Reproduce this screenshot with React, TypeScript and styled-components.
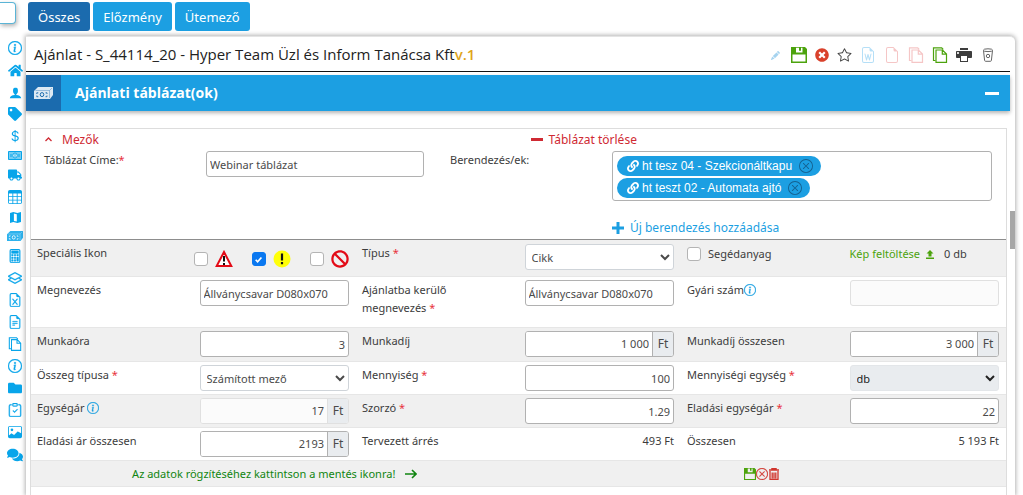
import React from "react";
import styled, { createGlobalStyle, css } from "styled-components";
import {
  BsInfoCircle, BsTable, BsCalculator, BsLayers, BsFileEarmarkExcel, BsFileEarmarkText,
  BsFileEarmarkWord, BsFileEarmark, BsClipboardCheck, BsImage, BsCurrencyDollar, BsPencilFill, BsXCircle,
} from "react-icons/bs";
import { FaHome, FaTag, FaTruck, FaFolder, FaComments, FaTimesCircle, FaLink, FaBan } from "react-icons/fa";
import { ImUser, ImPrinter } from "react-icons/im";
import { GoStar } from "react-icons/go";

const sans = '"Noto Sans", "Open Sans", sans-serif';
const blue = "#1c9fe2";
const darkBlue = "#1b6bae";
const red = "#cf2a33";
const green = "#4ca30d";

const GlobalStyle = createGlobalStyle`
  *, *::before, *::after { box-sizing: border-box; }
  html, body, #root { height: 100%; }
  body { margin: 0; background: #fff; overflow: hidden; font: 11px/18px ${sans}; color: #3c3c3c; }
  button, input, select { font: inherit; color: inherit; }
  button { cursor: pointer; }
  svg { display: block; flex: none; }
`;

const Page = styled.div`
  display: grid;
  grid-template-columns: 26px minmax(0, 1fr);
  height: 100%;
  overflow: hidden;
`;
const Side = styled.aside`
  display: flex;
  flex-direction: column;
  padding-top: 2px;
`;
const Handle = styled.button`
  width: 16px;
  height: 22px;
  margin-bottom: 13px;
  padding: 0;
  border: 1px solid #5ab4d6;
  border-left: 0;
  border-radius: 0 4px 4px 0;
  background: #fff;
  box-shadow: 1px 2px 4px rgba(0, 0, 0, 0.3);
`;
const SideNav = styled.nav`
  display: flex;
  flex-direction: column;
  justify-content: space-around;
  min-height: 430px;
`;
const SideLink = styled.a`
  display: flex;
  justify-content: center;
  padding-left: 4px;
  color: #08a5ea;
  font-size: 14px;
`;

const Main = styled.main`
  display: flex;
  flex-direction: column;
  min-width: 0;
  padding: 2px 8px 0 0;
`;
const Tabs = styled.nav`
  display: flex;
  gap: 3px;
  padding: 0 2px;
  margin-bottom: 5px;
`;
const Tab = styled.button<{ $active?: boolean }>`
  height: 29px;
  padding: 0 10px;
  border: 0;
  border-radius: 3px;
  background: ${(p) => (p.$active ? darkBlue : blue)};
  color: #fff;
  font-size: 13px;
  line-height: 20px;
`;
const Card = styled.section`
  position: relative;
  flex: 1;
  padding-right: 5px;
  border-top: 1px solid #e4e4e4;
  border-radius: 0 5px 0 0;
  background: #fff;
  box-shadow: 0 0 4px 1px rgba(0, 0, 0, 0.3);
`;
const ScrollThumb = styled.div`
  position: absolute;
  top: 38%;
  right: 0;
  width: 5px;
  height: 38px;
  background: #a6a6a6;
`;
const TitleRow = styled.header`
  display: flex;
  align-items: center;
  justify-content: space-between;
  height: 35px;
  padding: 0 14px 0 8px;
  border-bottom: 1px solid #111;
`;
const Title = styled.h1`
  margin: 0;
  font-family: "Open Sans", "Noto Sans", sans-serif;
  font-size: 15px;
  font-weight: 500;
  line-height: 20px;
  color: #222;
`;
const Version = styled.span`
  color: #e0a51b;
  font-weight: 600;
`;
const Tools = styled.div`
  display: flex;
  align-items: center;
  gap: 8px;
  padding-top: 2px;
`;
const IconButton = styled.button<{ $color: string; $size?: number; $wide?: boolean }>`
  display: flex;
  align-items: center;
  justify-content: center;
  width: ${(p) => (p.$wide ? 16 : p.$size ?? 16)}px;
  padding: 0;
  border: 0;
  background: none;
  color: ${(p) => p.$color};
  font-size: ${(p) => p.$size ?? 16}px;
`;
const SectionBar = styled.div`
  display: flex;
  align-items: center;
  height: 36px;
  margin-top: 3px;
  padding-right: 11px;
  background: ${blue};
  color: #fff;
  box-shadow: 0 2px 4px rgba(0, 0, 0, 0.3);
`;
const SectionIcon = styled.span`
  display: flex;
  align-items: center;
  justify-content: center;
  width: 35px;
  height: 36px;
  background: ${darkBlue};
`;
const SectionTitle = styled.h2`
  flex: 1;
  margin: 0 0 0 14px;
  font-family: "Open Sans", "Noto Sans", sans-serif;
  font-size: 14px;
  font-weight: 700;
  line-height: 20px;
`;
const Collapse = styled.button`
  width: 14px;
  height: 14px;
  padding: 0;
  border: 0;
  background: linear-gradient(#fff, #fff) center / 14px 3px no-repeat;
`;
const Panel = styled.form`
  margin: 17px 3px 0 4px;
  border: 1px solid #ddd;
  border-bottom: 0;
  height: 100%;
`;
const PanelActions = styled.div`
  display: grid;
  grid-template-columns: 1fr 1fr;
  height: 20px;
  padding-top: 1px;
`;
const TextAction = styled.button<{ $color: string; $gap: number }>`
  display: inline-flex;
  align-items: center;
  justify-self: start;
  gap: ${(p) => p.$gap}px;
  padding: 0;
  border: 0;
  background: none;
  color: ${(p) => p.$color};
  font-size: 12px;
`;
const FieldsToggle = styled(TextAction)`
  margin-left: 14px;
`;
const RemoveTable = styled(TextAction)`
  margin-left: 12px;
`;
const AddDevice = styled(TextAction)`
  margin-top: 18px;
  height: 18px;
`;
const HeadFields = styled.div`
  display: grid;
  grid-template-columns: 162fr 244fr 162fr 394fr;
  padding: 2px 7px 0 6px;
`;
const HeadCell = styled.div<{ $right?: number }>`
  min-width: 0;
  padding: 0 ${(p) => p.$right ?? 7}px 0 7px;
`;
const Star = styled.span`
  color: #e8323c;
`;

const fieldBox = css`
  display: block;
  width: 100%;
  height: 26px;
  border: 1px solid #b1b1b1;
  border-radius: 3px;
  background: #fff;
  color: #4a4a4a;
`;
const Input = styled.input<{ $right?: boolean; $muted?: boolean }>`
  ${fieldBox}
  min-width: 0;
  padding: 0 3px;
  text-align: ${(p) => (p.$right ? "right" : "left")};
  ${(p) => p.$muted && "border-color: #e0e0e0; background: #fbfbfb;"}
`;
const Select = styled.select<{ $filled?: boolean }>`
  ${fieldBox}
  padding: 0 0 0 2px;
  border-color: #cfd4d9;
  ${(p) => p.$filled && "background: #e9ecef; border-color: #e3e6e9; color: #222;"}
`;
const InputGroup = styled.div<{ $muted?: boolean }>`
  ${fieldBox}
  display: flex;
  overflow: hidden;
  ${(p) => p.$muted && "border-color: #e0e0e0;"}
`;
const GroupInput = styled.input<{ $muted?: boolean }>`
  flex: 1;
  min-width: 0;
  padding: 0 3px;
  border: 0;
  border-right: 1px solid ${(p) => (p.$muted ? "#e0e0e0" : "#b1b1b1")};
  background: ${(p) => (p.$muted ? "#fbfbfb" : "#fff")};
  text-align: right;
`;
const Unit = styled.span`
  display: flex;
  align-items: center;
  justify-content: center;
  width: 20px;
  background: #e9ecef;
  font-size: 12px;
`;
const TagBox = styled.div`
  display: flex;
  flex-direction: column;
  align-items: flex-start;
  gap: 2px;
  height: 50px;
  padding: 4px;
  border: 1px solid #b1b1b1;
  border-radius: 3px;
`;
const Tag = styled.span`
  display: flex;
  align-items: center;
  height: 20px;
  padding: 0 0 0 10px;
  border-radius: 10px;
  background: ${blue};
  color: #fff;
  font: 12px/20px "Liberation Sans", Arial, sans-serif;
  gap: 3px;
`;
const TagRemove = styled.button`
  display: flex;
  margin-left: 4px;
  padding: 0 8px 0 0;
  border: 0;
  background: none;
  color: #14608f;
  font-size: 14px;
`;

const Row = styled.div<{ $height: number; $shade?: boolean; $first?: boolean }>`
  display: grid;
  grid-template-columns: repeat(6, minmax(0, 1fr));
  min-height: ${(p) => p.$height}px;
  border-top: 1px solid ${(p) => (p.$first ? "#8d8d8d" : "#e6e6e6")};
  background: ${(p) => (p.$shade ? "#f0f0f0" : "#fff")};
`;
const LabelCell = styled.label`
  padding: 4px 6px 0;
`;
const Cell = styled.div<{ $first?: boolean }>`
  padding: ${(p) => (p.$first ? 4 : 3)}px 7px 0 6px;
`;
const ValueCell = styled(Cell)`
  padding-top: 4px;
  text-align: right;
`;
const InfoIcon = styled(BsInfoCircle)`
  display: inline-block;
  vertical-align: -2px;
  color: #1ba0e2;
  font-size: 12px;
  stroke: currentColor;
  stroke-width: 0.4px;
`;
const IconChoices = styled.div`
  display: grid;
  grid-template-columns: repeat(3, 58px);
  padding: 10px 0 0;
`;
const Choice = styled.label`
  display: flex;
  align-items: center;
  gap: 7px;
  height: 18px;
`;
const Checkbox = styled.input.attrs({ type: "checkbox" })`
  appearance: none;
  flex: none;
  width: 14px;
  height: 14px;
  margin: 0;
  border: 1px solid #b4b4b4;
  border-radius: 3px;
  background: #fff;
  &:checked {
    border-color: #0a78f0;
    background: #0a78f0
      url("data:image/svg+xml,%3Csvg xmlns='http://www.w3.org/2000/svg' viewBox='0 0 8 8'%3E%3Cpath d='M1.5 4.2 3.2 6 6.6 2.2' fill='none' stroke='%23fff' stroke-width='1.5'/%3E%3C/svg%3E")
      center / 9px no-repeat;
  }
`;
const CheckCell = styled.label`
  display: flex;
  align-items: center;
  gap: 7px;
  height: 18px;
  margin: 5px 6px 0;
`;
const UploadCell = styled.div`
  display: flex;
  align-items: center;
  gap: 10px;
  height: 18px;
  margin: 5px 0 0 6px;
  white-space: nowrap;
`;
const UploadLink = styled.a`
  display: flex;
  align-items: center;
  gap: 6px;
  color: ${green};
  text-decoration: none;
`;
const Footer = styled.div`
  display: grid;
  grid-template-columns: 1fr 1fr;
  align-items: center;
  height: 27px;
  border-top: 1px solid #e6e6e6;
  border-bottom: 1px solid #e6e6e6;
  background: #f0f0f0;
`;
const FooterHint = styled.p`
  display: flex;
  align-items: center;
  justify-content: center;
  gap: 10px;
  margin: 0;
  color: #118511;
`;
const FooterButtons = styled.div`
  display: flex;
  align-items: center;
  justify-content: center;
`;

const SaveIcon = () => (
  <svg width="1em" height="1em" viewBox="0 0 16 16" fill="currentColor">
    <path fillRule="evenodd" d="M0 0h14l2 2v14H0zM1.500 7.500v7h13v-7zM5 .800v4.700h6.500V.800H10v3H8v-3z" />
  </svg>
);
const CopyIcon = () => (
  <svg width="1em" height="1em" viewBox="0 0 16 16" fill="none" stroke="currentColor" strokeWidth="1.200">
    <path d="M3.500 13.500h-2V.800h8.200l1.500 1.700" />
    <path d="M4 3h6.500L14.500 7v8.300H4zM10.300 3v4.200h4" />
  </svg>
);
const BinIcon = () => (
  <svg width="1em" height="1em" viewBox="0 0 14 14" fill="none" stroke="currentColor">
    <path d="M2.500 2.500 3.600 12.400q.1.9 1 .9h4.800q.9 0 1-.9L11.500 2.500" />
    <ellipse cx="7" cy="2.200" rx="4.600" ry="1.400" />
    <circle cx="7" cy="8" r="1.700" />
  </svg>
);
const TrashIcon = () => (
  <svg width="1em" height="1em" viewBox="0 0 12 12" fill="none" stroke="currentColor">
    <path d="M4 1.500V.500h4v1M1 2h10" strokeWidth="1.500" />
    <path d="M2 3v8.300h8V3M4.200 4.500v6M6 4.500v6M7.800 4.500v6" strokeWidth="1.300" />
  </svg>
);
const NoteIcon = () => (
  <svg width="14" height="9" viewBox="0 0 14 9" fill="none" stroke="currentColor">
    <path d="M.500.500h13v8H.500z" fill="currentColor" fillOpacity="0.550" />
    <ellipse cx="7" cy="4.500" rx="2.200" ry="2.500" fill="#fff" />
    <path d="M7 3v3M3 3v3M11 3v3" />
  </svg>
);
const NoteStackIcon = ({ width = 16, ink = "#fff" }: { width?: number; ink?: string }) => (
  <svg width={width} viewBox="0 0 19 12" fill="none">
    <path d="M4 0h15v8l-3 4H0V4z" fill="currentColor" fillOpacity="0.850" />
    <path d="M1.500 3.500H15.500V11M15.500 3.500 18 1" stroke={ink} strokeOpacity="0.500" strokeWidth="0.700" />
    <ellipse cx="8" cy="7.600" rx="1.800" ry="2" stroke={ink} strokeWidth="1" />
    <path d="M2.800 7V5.800h1.500M11.500 5.800H13V7M2.800 8.500v1.200h1.500M11.500 9.700H13V8.500" stroke={ink} strokeWidth="0.900" />
  </svg>
);
const MapIcon = () => (
  <svg width="11" height="11" viewBox="0 0 11 11" fill="currentColor">
    <path fillRule="evenodd" d="M0 1 3.300 0 7.400 1 11 0v10l-3.600 1-4.100-1L0 11zM3.900 1.500v7.400l2.900.700V2.200z" />
  </svg>
);
const WarningIcon = () => (
  <svg width="18" height="18" viewBox="0 0 18 18">
    <path d="M9 2 16.300 16H1.700z" fill="#fff" stroke="#e30b17" strokeWidth="2" />
    <path d="M9 6v5.500M9 13v2" stroke="#111" strokeWidth="2" />
  </svg>
);
const AttentionIcon = () => (
  <svg width="18" height="18" viewBox="0 0 18 18">
    <circle cx="9" cy="9" r="8.500" fill="#ffff0a" />
    <path d="M9 3.500v7M9 12v2.200" stroke="#111" strokeWidth="2.200" />
  </svg>
);
const UploadIcon = () => (
  <svg width="8" height="9" viewBox="0 0 8 9" fill="currentColor">
    <path d="M4 0 7.500 3.500H5.500V6.500H2.500V3.500H.500zM0 7.500h8V9H0z" />
  </svg>
);
const ArrowIcon = () => (
  <svg width="12" height="10" viewBox="0 0 12 10" fill="none" stroke="currentColor" strokeWidth="1.600">
    <path d="M0 5h11M7 1l4 4-4 4" />
  </svg>
);
const CaretIcon = () => (
  <svg width="7" height="5" viewBox="0 0 7 5" fill="none" stroke="currentColor" strokeWidth="1.300">
    <path d="M.500 4 3.500 1l3 3" />
  </svg>
);
const MinusIcon = () => (
  <svg width="12" height="3" viewBox="0 0 12 3"><path d="M0 0h12v3H0z" fill="currentColor" /></svg>
);
const PlusIcon = () => (
  <svg width="12" height="12" viewBox="0 0 12 12"><path d="M4.500 0h3v4.500H12v3H7.500V12h-3V7.500H0v-3h4.500z" fill="currentColor" /></svg>
);

const sideItems: [string, React.ReactNode][] = [
  ["Információ", <BsInfoCircle stroke="currentColor" strokeWidth="0.4" />],
  ["Kezdőlap", <FaHome size={15} />],
  ["Ügyfél", <ImUser size={13} />],
  ["Címke", <FaTag />],
  ["Pénznem", <BsCurrencyDollar />],
  ["Készpénz", <NoteIcon />],
  ["Szállítás", <FaTruck />],
  ["Táblázat", <BsTable />],
  ["Térkép", <MapIcon />],
  ["Ajánlatok", <NoteStackIcon />],
  ["Kalkulátor", <BsCalculator stroke="currentColor" strokeWidth="0.4" />],
  ["Rétegek", <BsLayers stroke="currentColor" strokeWidth="0.4" />],
  ["Excel", <BsFileEarmarkExcel stroke="currentColor" strokeWidth="0.3" />],
  ["Dokumentum", <BsFileEarmarkText stroke="currentColor" strokeWidth="0.3" />],
  ["Másolatok", <CopyIcon />],
  ["Részletek", <BsInfoCircle stroke="currentColor" strokeWidth="0.4" />],
  ["Mappa", <FaFolder />],
  ["Feladatok", <BsClipboardCheck stroke="currentColor" strokeWidth="0.4" />],
  ["Képek", <BsImage />],
  ["Üzenetek", <FaComments size={16} />],
];

const Money = ({ id, value, muted }: { id: string; value: string; muted?: boolean }) => (
  <InputGroup $muted={muted}>
    <GroupInput id={id} defaultValue={value} $muted={muted} />
    <Unit>Ft</Unit>
  </InputGroup>
);

export default function App() {
  return (
    <>
      <GlobalStyle />
      <Page>
        <Side>
          <Handle aria-label="Menü" />
          <SideNav>
            {sideItems.map(([label, icon]) => (
              <SideLink key={label} href="#" aria-label={label}>{icon}</SideLink>
            ))}
          </SideNav>
        </Side>
        <Main>
          <Tabs>
            <Tab $active>Összes</Tab>
            <Tab>Előzmény</Tab>
            <Tab>Ütemező</Tab>
          </Tabs>
          <Card>
            <TitleRow>
              <Title>Ajánlat - S_44114_20 - Hyper Team Üzl és Inform Tanácsa Kft<Version>v.1</Version></Title>
              <Tools>
                <IconButton $color="#a5d3ef" $size={9} $wide aria-label="Szerkesztés"><BsPencilFill /></IconButton>
                <IconButton $color={green} aria-label="Mentés"><SaveIcon /></IconButton>
                <IconButton $color="#d9412b" $size={14} aria-label="Mégse"><FaTimesCircle /></IconButton>
                <IconButton $color="#444" $size={15} aria-label="Kedvenc"><GoStar /></IconButton>
                <IconButton $color="#b5dff7" aria-label="Word"><BsFileEarmarkWord /></IconButton>
                <IconButton $color="#f5c6c6" aria-label="Dokumentum"><BsFileEarmark /></IconButton>
                <IconButton $color="#f5c6c6" aria-label="PDF másolat"><CopyIcon /></IconButton>
                <IconButton $color={green} aria-label="Másolás"><CopyIcon /></IconButton>
                <IconButton $color="#3d3d3d" aria-label="Nyomtatás"><ImPrinter /></IconButton>
                <IconButton $color="#666" $size={14} $wide aria-label="Törlés"><BinIcon /></IconButton>
              </Tools>
            </TitleRow>
            <SectionBar>
              <SectionIcon><NoteStackIcon width={19} ink={darkBlue} /></SectionIcon>
              <SectionTitle>Ajánlati táblázat(ok)</SectionTitle>
              <Collapse aria-label="Összecsukás" />
            </SectionBar>
            <Panel onSubmit={(e) => e.preventDefault()}>
              <PanelActions>
                <FieldsToggle type="button" $color={red} $gap={10}><CaretIcon />Mezők</FieldsToggle>
                <RemoveTable type="button" $color={red} $gap={6}><MinusIcon />Táblázat törlése</RemoveTable>
              </PanelActions>
              <HeadFields>
                <HeadCell><label htmlFor="title">Táblázat Címe:<Star>*</Star></label></HeadCell>
                <HeadCell $right={19}><Input id="title" defaultValue="Webinar táblázat" /></HeadCell>
                <HeadCell>Berendezés/ek:</HeadCell>
                <HeadCell>
                  <TagBox>
                    <Tag><FaLink />ht tesz 04 - Szekcionáltkapu<TagRemove type="button" aria-label="Eltávolítás"><BsXCircle /></TagRemove></Tag>
                    <Tag><FaLink />ht teszt 02 - Automata ajtó<TagRemove type="button" aria-label="Eltávolítás"><BsXCircle /></TagRemove></Tag>
                  </TagBox>
                  <AddDevice type="button" $color={blue} $gap={6}><PlusIcon />Új berendezés hozzáadása</AddDevice>
                </HeadCell>
              </HeadFields>

              <Row $height={37} $shade $first>
                <LabelCell as="div">Speciális Ikon</LabelCell>
                <Cell as={IconChoices}>
                  <Choice><Checkbox aria-label="Veszély" /><WarningIcon /></Choice>
                  <Choice><Checkbox defaultChecked aria-label="Figyelem" /><AttentionIcon /></Choice>
                  <Choice><Checkbox aria-label="Tiltás" /><FaBan size={18} color="#e30b17" /></Choice>
                </Cell>
                <LabelCell htmlFor="type">Típus <Star>*</Star></LabelCell>
                <Cell $first><Select id="type"><option>Cikk</option></Select></Cell>
                <CheckCell><Checkbox />Segédanyag</CheckCell>
                <UploadCell><UploadLink href="#">Kép feltöltése<UploadIcon /></UploadLink>0 db</UploadCell>
              </Row>
              <Row $height={51}>
                <LabelCell htmlFor="name">Megnevezés</LabelCell>
                <Cell><Input id="name" defaultValue="Állványcsavar D080x070" /></Cell>
                <LabelCell htmlFor="offerName">Ajánlatba kerülő megnevezés <Star>*</Star></LabelCell>
                <Cell><Input id="offerName" defaultValue="Állványcsavar D080x070" /></Cell>
                <LabelCell htmlFor="serial">Gyári szám<InfoIcon /></LabelCell>
                <Cell><Input id="serial" $muted /></Cell>
              </Row>
              <Row $height={34} $shade>
                <LabelCell htmlFor="hours">Munkaóra</LabelCell>
                <Cell><Input id="hours" $right defaultValue="3" /></Cell>
                <LabelCell htmlFor="fee">Munkadíj</LabelCell>
                <Cell><Money id="fee" value="1 000" /></Cell>
                <LabelCell htmlFor="feeTotal">Munkadíj összesen</LabelCell>
                <Cell><Money id="feeTotal" value="3 000" /></Cell>
              </Row>
              <Row $height={33}>
                <LabelCell htmlFor="sumType">Összeg típusa <Star>*</Star></LabelCell>
                <Cell><Select id="sumType"><option>Számított mező</option></Select></Cell>
                <LabelCell htmlFor="qty">Mennyiség <Star>*</Star></LabelCell>
                <Cell><Input id="qty" $right defaultValue="100" /></Cell>
                <LabelCell htmlFor="unit">Mennyiségi egység <Star>*</Star></LabelCell>
                <Cell><Select id="unit" $filled><option>db</option></Select></Cell>
              </Row>
              <Row $height={33} $shade>
                <LabelCell htmlFor="price">Egységár <InfoIcon /></LabelCell>
                <Cell><Money id="price" value="17" muted /></Cell>
                <LabelCell htmlFor="factor">Szorzó <Star>*</Star></LabelCell>
                <Cell><Input id="factor" $right defaultValue="1.29" /></Cell>
                <LabelCell htmlFor="sale">Eladási egységár <Star>*</Star></LabelCell>
                <Cell><Input id="sale" $right defaultValue="22" /></Cell>
              </Row>
              <Row $height={33}>
                <LabelCell htmlFor="saleTotal">Eladási ár összesen</LabelCell>
                <Cell><Money id="saleTotal" value="2193" /></Cell>
                <LabelCell as="div">Tervezett árrés</LabelCell>
                <ValueCell>493 Ft</ValueCell>
                <LabelCell as="div">Összesen</LabelCell>
                <ValueCell>5 193 Ft</ValueCell>
              </Row>
              <Footer>
                <FooterHint>Az adatok rögzítéséhez kattintson a mentés ikonra!<ArrowIcon /></FooterHint>
                <FooterButtons>
                  <IconButton type="button" $color={green} $size={12} aria-label="Mentés"><SaveIcon /></IconButton>
                  <IconButton type="button" $color="#d0342c" $size={12} aria-label="Mégse"><BsXCircle stroke="currentColor" strokeWidth="0.4" /></IconButton>
                  <IconButton type="button" $color="#d0342c" $size={12} aria-label="Törlés"><TrashIcon /></IconButton>
                </FooterButtons>
              </Footer>
            </Panel>
            <ScrollThumb />
          </Card>
        </Main>
      </Page>
    </>
  );
}
